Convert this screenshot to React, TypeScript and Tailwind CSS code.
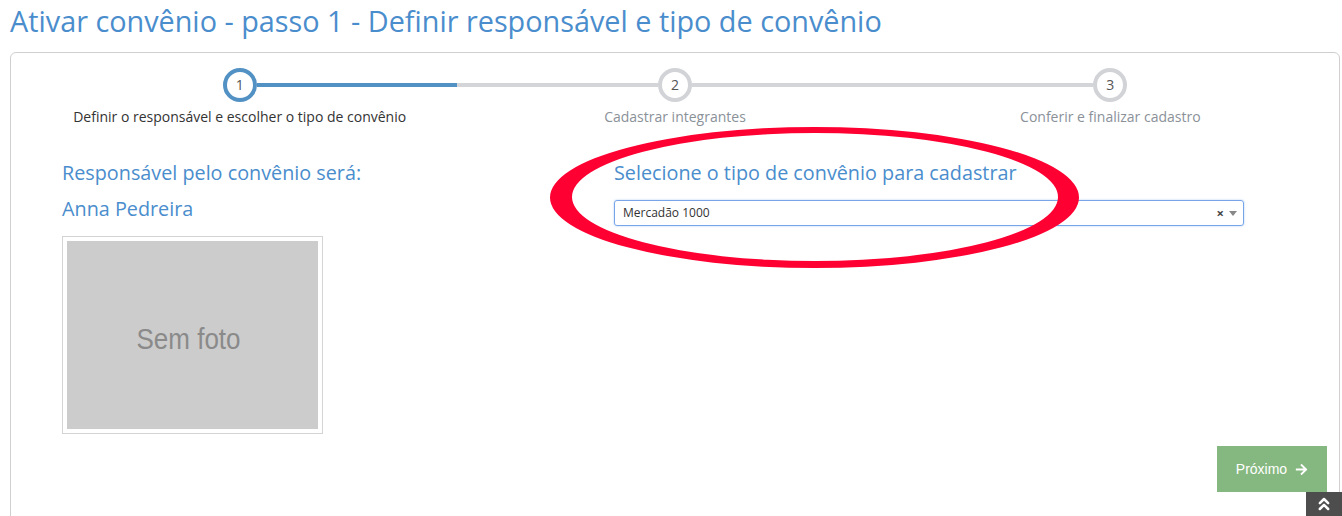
import React from "react";
import { ChevronsUp } from "lucide-react";
import { FaArrowRight } from "react-icons/fa";

type StepProps = {
  n: number;
  label: string;
  active?: boolean;
  left: string;
  right: string;
};

function Step({ n, label, active, left, right }: StepProps) {
  return (
    <div className="flex flex-col items-center">
      <div className="flex w-full items-center">
        <div className={`h-[4px] flex-1 ${left}`} />
        <div
          className={`flex h-[34px] w-[34px] items-center justify-center rounded-full border-4 bg-white text-[14px] leading-none text-[#555] ${
            active ? "border-[#5291c4]" : "border-[#d1d3d7]"
          }`}
        >
          {n}
        </div>
        <div className={`h-[4px] flex-1 ${right}`} />
      </div>
      <div
        className={`mt-[5px] text-[14px] leading-[20px] ${
          active ? "text-[#333]" : "text-[#8a9199]"
        }`}
      >
        {label}
      </div>
    </div>
  );
}

export default function App() {
  return (
    <div className="relative h-[516px] w-[1342px] overflow-hidden bg-white font-['Open_Sans',sans-serif]">
      <h1 className="pl-[10px] text-[28.8px] font-normal leading-[41px] text-[#4a8dcd]">
        Ativar convênio - passo 1 - Definir responsável e tipo de convênio
      </h1>

      <div className="ml-[10px] mt-[11px] h-[480px] w-[1330px] rounded-t-[6px] border border-[#cfcfcf] px-[11px] pt-[15px]">
        <div className="grid grid-cols-3">
          <Step
            n={1}
            active
            label="Definir o responsável e escolher o tipo de convênio"
            left="bg-transparent"
            right="bg-[#5291c4]"
          />
          <Step
            n={2}
            label="Cadastrar integrantes"
            left="bg-[#d3d5d9]"
            right="bg-[#d3d5d9]"
          />
          <Step
            n={3}
            label="Conferir e finalizar cadastro"
            left="bg-[#d3d5d9]"
            right="bg-transparent"
          />
        </div>

        <div className="mt-[32px] flex">
          <div className="ml-[40px] w-[552px]">
            <div className="text-[19.8px] leading-[28px] text-[#4a8dcd]">
              Responsável pelo convênio será:
            </div>
            <div className="mt-[8px] text-[19.8px] leading-[28px] text-[#4a8dcd]">
              Anna Pedreira
            </div>
            <div className="mt-[13px] h-[198px] w-[261px] border border-[#d4d4d4] p-[4px]">
              <div className="flex h-full w-full items-center justify-center bg-[#cccccc] pr-[8px] pt-[9px]">
                <span className="inline-block scale-y-[1.15] font-['Liberation_Sans',Arial,sans-serif] text-[26px] text-[#8a8a8a]">
                  Sem foto
                </span>
              </div>
            </div>
          </div>

          <div className="w-[630px]">
            <div className="text-[19.8px] leading-[28px] text-[#4a8dcd]">
              Selecione o tipo de convênio para cadastrar
            </div>
            <div className="mt-[13px] flex h-[26px] items-center rounded-[3px] border border-[#78a5e8] pl-[8px] pr-[6px] shadow-[0_0_2px_rgba(82,145,230,0.5)]">
              <span className="flex-1 text-[12px] text-[#333]">Mercadão 1000</span>
              <span className="mr-[5px] text-[13px] font-bold leading-none text-[#444]">×</span>
              <span className="h-0 w-0 border-x-[4px] border-t-[5px] border-x-transparent border-t-[#888]" />
            </div>
          </div>
        </div>

        <div className="mt-[12px] flex justify-end pr-[1px]">
          <button className="flex h-[46px] w-[110px] items-center justify-center gap-[8px] bg-[#85b880] font-['Liberation_Sans',Arial,sans-serif] text-[14px] text-white">
            Próximo
            <FaArrowRight size={13} />
          </button>
        </div>
      </div>

      <svg
        className="pointer-events-none absolute left-0 top-0"
        width="1342"
        height="516"
      >
        <path
          fillRule="evenodd"
          fill="#ff0033"
          d="M 550 197.5 a 264.5 70.5 0 1 0 529 0 a 264.5 70.5 0 1 0 -529 0 Z M 572 197 a 243 64 0 1 0 486 0 a 243 64 0 1 0 -486 0 Z"
        />
      </svg>

      <div className="absolute bottom-0 right-0 flex h-[24px] w-[36px] items-center justify-center bg-[#4d4d4d]">
        <ChevronsUp size={20} strokeWidth={3} color="#ffffff" />
      </div>
    </div>
  );
}
